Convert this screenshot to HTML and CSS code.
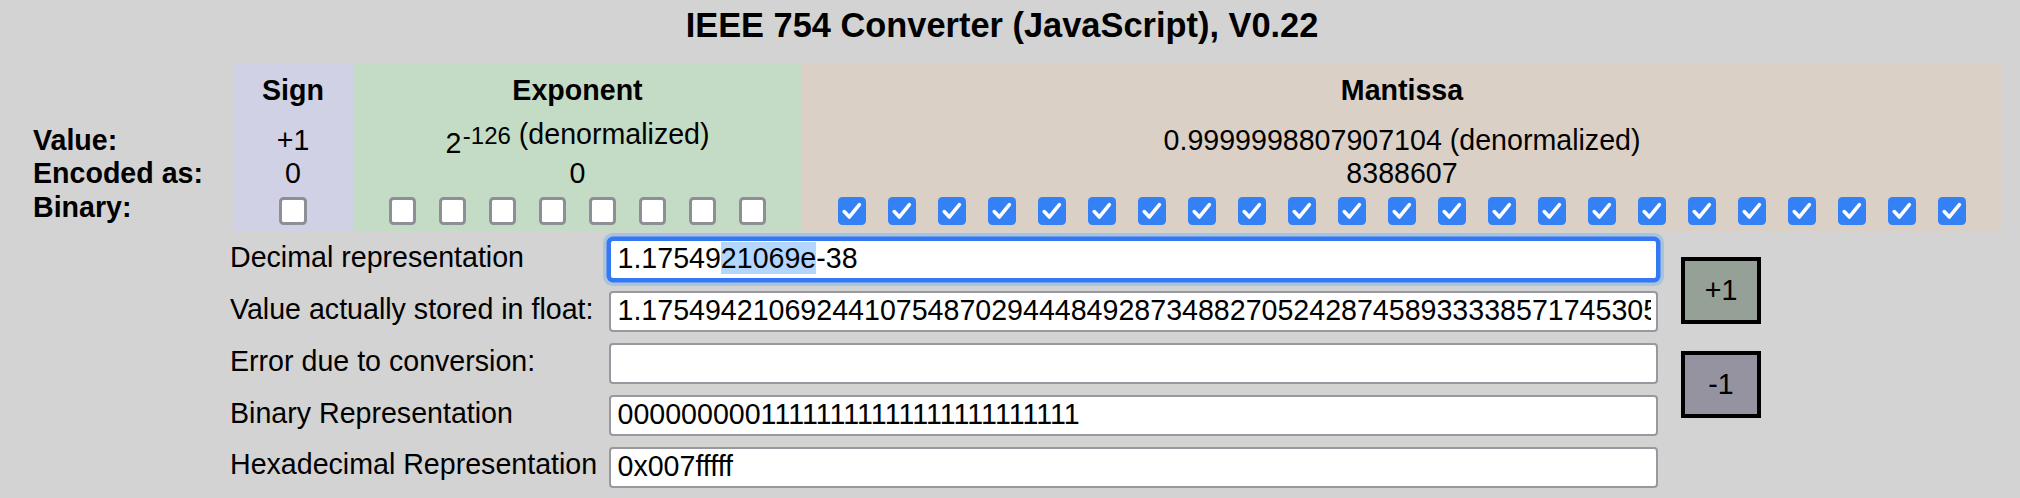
FILE: index.html
```html
<!DOCTYPE html>
<html lang="en">
<head>
<meta charset="utf-8">
<title>IEEE 754 Converter</title>
<link rel="stylesheet" href="styles.css">
</head>
<body>
<div class="page">
  <h1 class="title">IEEE 754 Converter (JavaScript), V0.22</h1>

  <div class="bits">
    <div class="col col-label">
      <div class="cell head"></div>
      <div class="cell row-value">Value:</div>
      <div class="cell row-enc">Encoded as:</div>
      <div class="cell row-bin">Binary:</div>
    </div>

    <div class="col col-sign">
      <div class="cell head">Sign</div>
      <div class="cell row-value">+1</div>
      <div class="cell row-enc">0</div>
      <div class="cell row-bin">
        <div class="boxes"><span class="cb"></span></div>
      </div>
    </div>

    <div class="col col-exp">
      <div class="cell head">Exponent</div>
      <div class="cell row-value pow"><span class="base">2</span><span class="expo"><span class="sup">-126</span> (denormalized)</span></div>
      <div class="cell row-enc">0</div>
      <div class="cell row-bin">
        <div class="boxes">
          <span class="cb"></span><span class="cb"></span><span class="cb"></span><span class="cb"></span>
          <span class="cb"></span><span class="cb"></span><span class="cb"></span><span class="cb"></span>
        </div>
      </div>
    </div>

    <div class="col col-man">
      <div class="cell head">Mantissa</div>
      <div class="cell row-value">0.9999998807907104 (denormalized)</div>
      <div class="cell row-enc">8388607</div>
      <div class="cell row-bin">
        <div class="boxes">
          <span class="cb on"><svg viewBox="0 0 27.4 27.4"><path d="M6.2 14.6 11.4 20 21.4 7.6"/></svg></span>
          <span class="cb on"><svg viewBox="0 0 27.4 27.4"><path d="M6.2 14.6 11.4 20 21.4 7.6"/></svg></span>
          <span class="cb on"><svg viewBox="0 0 27.4 27.4"><path d="M6.2 14.6 11.4 20 21.4 7.6"/></svg></span>
          <span class="cb on"><svg viewBox="0 0 27.4 27.4"><path d="M6.2 14.6 11.4 20 21.4 7.6"/></svg></span>
          <span class="cb on"><svg viewBox="0 0 27.4 27.4"><path d="M6.2 14.6 11.4 20 21.4 7.6"/></svg></span>
          <span class="cb on"><svg viewBox="0 0 27.4 27.4"><path d="M6.2 14.6 11.4 20 21.4 7.6"/></svg></span>
          <span class="cb on"><svg viewBox="0 0 27.4 27.4"><path d="M6.2 14.6 11.4 20 21.4 7.6"/></svg></span>
          <span class="cb on"><svg viewBox="0 0 27.4 27.4"><path d="M6.2 14.6 11.4 20 21.4 7.6"/></svg></span>
          <span class="cb on"><svg viewBox="0 0 27.4 27.4"><path d="M6.2 14.6 11.4 20 21.4 7.6"/></svg></span>
          <span class="cb on"><svg viewBox="0 0 27.4 27.4"><path d="M6.2 14.6 11.4 20 21.4 7.6"/></svg></span>
          <span class="cb on"><svg viewBox="0 0 27.4 27.4"><path d="M6.2 14.6 11.4 20 21.4 7.6"/></svg></span>
          <span class="cb on"><svg viewBox="0 0 27.4 27.4"><path d="M6.2 14.6 11.4 20 21.4 7.6"/></svg></span>
          <span class="cb on"><svg viewBox="0 0 27.4 27.4"><path d="M6.2 14.6 11.4 20 21.4 7.6"/></svg></span>
          <span class="cb on"><svg viewBox="0 0 27.4 27.4"><path d="M6.2 14.6 11.4 20 21.4 7.6"/></svg></span>
          <span class="cb on"><svg viewBox="0 0 27.4 27.4"><path d="M6.2 14.6 11.4 20 21.4 7.6"/></svg></span>
          <span class="cb on"><svg viewBox="0 0 27.4 27.4"><path d="M6.2 14.6 11.4 20 21.4 7.6"/></svg></span>
          <span class="cb on"><svg viewBox="0 0 27.4 27.4"><path d="M6.2 14.6 11.4 20 21.4 7.6"/></svg></span>
          <span class="cb on"><svg viewBox="0 0 27.4 27.4"><path d="M6.2 14.6 11.4 20 21.4 7.6"/></svg></span>
          <span class="cb on"><svg viewBox="0 0 27.4 27.4"><path d="M6.2 14.6 11.4 20 21.4 7.6"/></svg></span>
          <span class="cb on"><svg viewBox="0 0 27.4 27.4"><path d="M6.2 14.6 11.4 20 21.4 7.6"/></svg></span>
          <span class="cb on"><svg viewBox="0 0 27.4 27.4"><path d="M6.2 14.6 11.4 20 21.4 7.6"/></svg></span>
          <span class="cb on"><svg viewBox="0 0 27.4 27.4"><path d="M6.2 14.6 11.4 20 21.4 7.6"/></svg></span>
          <span class="cb on"><svg viewBox="0 0 27.4 27.4"><path d="M6.2 14.6 11.4 20 21.4 7.6"/></svg></span>
        </div>
      </div>
    </div>
  </div>

  <div class="conv">
    <div class="fields">
      <div class="flabel">Decimal representation</div>
      <div class="field focus"><span class="val">1.17549<span class="sel">21069e</span>-38</span></div>

      <div class="flabel">Value actually stored in float:</div>
      <div class="field"><span class="val">1.1754942106924410754870294448492873488270524287458933338571745305715888704756189042655023513361811683425903320312</span></div>

      <div class="flabel">Error due to conversion:</div>
      <div class="field"><span class="val"></span></div>

      <div class="flabel">Binary Representation</div>
      <div class="field"><span class="val">00000000011111111111111111111111</span></div>

      <div class="flabel">Hexadecimal Representation</div>
      <div class="field"><span class="val">0x007fffff</span></div>
    </div>
    <div class="btns">
      <button class="btn plus" type="button">+1</button>
      <button class="btn minus" type="button">-1</button>
    </div>
  </div>
</div>
</body>
</html>
```

FILE: styles.css
```css
* {
  box-sizing: border-box;
}

html,
body {
  margin: 0;
  background: #d3d3d3;
}

body {
  font-family: "Liberation Sans", Arial, Helvetica, sans-serif;
  font-size: 28.6px;
  color: #000;
}

.page {
  width: 2004px;
  padding-top: 6px;
}

.title {
  margin: 0 0 17.5px;
  font-size: 34.4px;
  line-height: 39.5px;
  font-weight: 700;
  text-align: center;
}

/* bit table */
.bits {
  display: flex;
  padding-left: 33px;
}

.col {
  display: flex;
  flex-direction: column;
}

.col-label {
  width: 200px;
  font-weight: 700;
}

.col-sign {
  width: 120px;
  background: #d0d1e4;
}

.col-exp {
  width: 449px;
  background: #c4dcc5;
}

.col-man {
  width: 1200px;
  background: #dad0c6;
}

.cell {
  line-height: 33px;
  text-align: center;
  white-space: nowrap;
}

.col-label .cell {
  text-align: left;
}

.head {
  height: 61.3px;
  padding-top: 10.6px;
  font-weight: 700;
}

.row-value,
.row-enc {
  height: 33.15px;
}

.row-bin {
  height: 40.4px;
}

.pow {
  display: flex;
  justify-content: center;
  align-items: flex-start;
}

.pow .base {
  margin-top: 2.6px;
}

.pow .expo {
  margin-top: -6.7px;
  margin-left: 1.5px;
}

.sup {
  font-size: 24px;
}

.boxes {
  display: flex;
  justify-content: center;
  gap: 22.6px;
  padding-top: 6.7px;
}

.cb {
  display: block;
  width: 27.4px;
  height: 27.4px;
  border-radius: 4.5px;
  background: #fff;
  border: 3px solid #8e8e96;
}

.cb.on {
  background: #3481f5;
  border: 0;
}

.cb svg {
  display: block;
  width: 100%;
  height: 100%;
}

.cb svg path {
  fill: none;
  stroke: #fff;
  stroke-width: 3.6;
  stroke-linecap: round;
  stroke-linejoin: round;
}

/* converter fields */
.conv {
  display: flex;
  align-items: flex-start;
  gap: 23px;
  padding-left: 230px;
  margin-top: 7.7px;
}

.fields {
  display: grid;
  grid-template-columns: 379px 1049px;
  grid-auto-rows: 41.3px;
  row-gap: 10.7px;
}

.flabel {
  line-height: 33px;
  padding-top: 1.9px;
  white-space: nowrap;
}

.field {
  height: 41.3px;
  background: #fff;
  border: 2.5px solid #99979f;
  border-radius: 4px;
  padding: 0 5px 0 6.5px;
  line-height: 35px;
}

.val {
  display: block;
  height: 100%;
  white-space: nowrap;
  overflow: hidden;
}

.field.focus {
  border-color: #3478f6;
  box-shadow: 0 0 0 2.5px #3478f6, 0 0 0 6px #a8c4dc;
}

.sel {
  background: #b3d6fe;
}

.btns {
  display: flex;
  flex-direction: column;
  gap: 27.3px;
  padding-top: 18.3px;
}

.btn {
  width: 80px;
  height: 66.7px;
  padding: 0;
  border: 4px solid #000;
  border-radius: 0;
  font-family: inherit;
  font-size: 28.6px;
  line-height: 33px;
  color: #000;
}

.plus {
  background: #95a096;
}

.minus {
  background: #9593a0;
}
```
